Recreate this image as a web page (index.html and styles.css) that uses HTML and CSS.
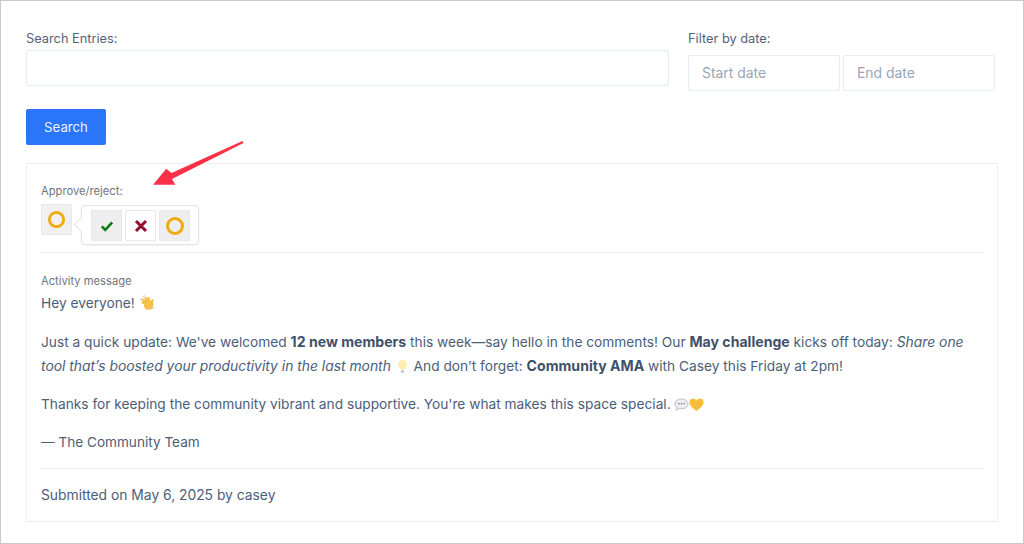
FILE: index.html
```html
<!DOCTYPE html>
<html lang="en">
<head>
<meta charset="utf-8">
<title>Entries</title>
<link rel="stylesheet" href="styles.css">
</head>
<body>
<div class="frame">
  <form class="search">
    <div class="fields">
      <div class="field-main">
        <label class="field-label">Search Entries:</label>
        <input class="input input-main" type="text">
      </div>
      <div class="field-date">
        <label class="field-label">Filter by date:</label>
        <div class="date-row">
          <input class="input input-date" type="text" placeholder="Start date">
          <input class="input input-date" type="text" placeholder="End date">
        </div>
      </div>
    </div>
    <button class="search-btn" type="button">Search</button>
  </form>
  <section class="entry">
    <div class="approve">
      <div class="small-label">Approve/reject:</div>
      <div class="status-wrap">
        <span class="status-btn"><svg class="ring ring-small" viewBox="0 0 20 20"><circle cx="10" cy="10" r="7.5"/></svg></span>
        <div class="popover">
          <span class="tool tool-on"><svg class="glyph" viewBox="0 0 16 16"><path class="check" d="M2.800 8.400 6.200 11.800 13.200 4.400"/></svg></span>
          <span class="tool"><svg class="glyph" viewBox="0 0 16 16"><path class="cross" d="M3 3 13 13M13 3 3 13"/></svg></span>
          <span class="tool tool-on"><svg class="ring" viewBox="0 0 20 20"><circle cx="10" cy="10" r="7.5"/></svg></span>
        </div>
      </div>
    </div>
    <div class="message">
      <div class="small-label">Activity message</div>
      <p class="first">Hey everyone! <svg class="emoji emoji-wave" viewBox="0 0 16 16"><path class="wave-lines" d="M1.500 5.500 2.500 3M4 1.500 6 .8M13.500 11.500 14.500 14"/><path class="wave-fingers" d="M10 10 3.500 7.500M10 10 4 4.800M10 10 6.500 3M10 10 9.500 3.200M11 10 13.500 5.500"/><circle class="wave-palm" cx="9.600" cy="10" r="4.800"/></svg></p>
      <p>Just a quick update: We've welcomed <strong>12 new members</strong> this week—say hello in the comments! Our <strong>May challenge</strong> kicks off today: <em>Share one tool that’s boosted your productivity in the last month</em> <svg class="emoji" viewBox="0 0 16 16"><path class="bulb-fill" d="M8 1a4.800 4.800 0 0 0-2.800 8.700c.6.500.8 1.100.9 1.800h3.800c.1-.7.3-1.300.9-1.800A4.800 4.800 0 0 0 8 1z"/><path class="bulb-base" d="M6.300 12h3.400v2.200l-1 .8H7.300l-1-.8z"/></svg> And don’t forget: <strong>Community AMA</strong> with Casey this Friday at 2pm!</p>
      <p>Thanks for keeping the community vibrant and supportive. You're what makes this space special. <svg class="emoji" viewBox="0 0 16 16"><path class="bubble-fill" d="M8 2C4 2 1 4.300 1 7.300c0 1.500.7 2.800 2 3.700l-.8 3 3.300-1.700c.8.200 1.600.3 2.500.3 4 0 7-2.300 7-5.300S12 2 8 2z"/><circle class="bubble-dot" cx="5.200" cy="7.300" r=".8"/><circle class="bubble-dot" cx="8" cy="7.300" r=".8"/><circle class="bubble-dot" cx="10.800" cy="7.300" r=".8"/></svg><svg class="emoji" viewBox="0 0 16 16"><path class="heart-fill" d="M8 15C3.500 11.600.5 9 .5 5.700.5 3.400 2.300 1.700 4.500 1.700 6 1.700 7.300 2.500 8 3.800 8.700 2.500 10 1.700 11.500 1.700c2.200 0 4 1.700 4 4C15.500 9 12.500 11.600 8 15z"/></svg></p>
      <p class="signoff">— The Community Team</p>
    </div>
    <div class="submitted">Submitted on May 6, 2025 by casey</div>
  </section>
  <svg class="annotation" viewBox="0 0 96 50"><path d="M92.500 1 21.500 33 16.300 28.700 3 44.700 25.300 44.700 22 39 93.500 3z"/></svg>
</div>
</body>
</html>
```
FILE: styles.css
```css
* { box-sizing: border-box; }
html, body { margin: 0; padding: 0; }
body {
  width: 1024px;
  height: 544px;
  overflow: hidden;
  background: #fff;
  font-family: Inter, "Liberation Sans", sans-serif;
  color: #4b5e78;
}
.frame {
  position: relative;
  height: 544px;
  border: 1px solid #cbcbcb;
  padding: 29px 25px 0 25px;
}
.fields { display: flex; justify-content: space-between; align-items: flex-start; padding-right: 3px; }
.field-main { width: 643px; }
.field-date { width: 307px; }
.field-label { display: block; font-size: 12.800px; line-height: 18px; color: #526379; }
.input {
  display: block;
  height: 36px;
  background: #fff;
  border: 1px solid #e8edf3;
  border-radius: 2px;
  font: 13.900px Inter, "Liberation Sans", sans-serif;
  padding: 0 13px;
  outline: none;
}
.input::placeholder { color: #9aa5b5; opacity: 1; }
.input-main { width: 100%; margin-top: 2px; }
.date-row { display: flex; gap: 3px; margin-top: 7px; }
.input-date { width: 152px; }
.search-btn {
  display: block;
  width: 80px;
  height: 36px;
  margin-top: 18px;
  border: 0;
  border-radius: 2px;
  background: #2b75fb;
  color: #eaf2ff;
  font: 13.200px Inter, "Liberation Sans", sans-serif;
  padding: 0;
}
.entry {
  margin-top: 18px;
  width: 972px;
  height: 359px;
  border: 1px solid #eceff5;
  padding: 0 14px;
}
.approve { padding-top: 20px; height: 89px; border-bottom: 1px solid #eceff5; }
.small-label { font-size: 11.200px; line-height: 14px; color: #6f747c; }
.status-wrap { position: relative; margin-top: 6px; }
.status-btn, .tool {
  display: flex;
  align-items: center;
  justify-content: center;
  border: 1px solid #e8e8e8;
}
.status-btn { width: 31px; height: 31px; background: #f0f0f0; }
.tool { position: relative; width: 31px; height: 31px; background: #fff; }
.tool-on { background: #eeeeee; }
.ring { width: 20px; height: 20px; fill: none; stroke: #eeaa0e; stroke-width: 3; }
.ring-small { width: 19px; height: 19px; }
.glyph { width: 16px; height: 16px; fill: none; }
.check { stroke: #107a12; stroke-width: 2.600; }
.cross { stroke: #960d27; stroke-width: 3; }
.popover {
  position: absolute;
  left: 40px;
  top: 1px;
  display: flex;
  gap: 3px;
  width: 118px;
  height: 40px;
  padding: 4px 0 0 9px;
  background: #fff;
  border: 1px solid #e5e5e5;
  border-radius: 4px;
  box-shadow: 0 1px 2px rgba(0,0,0,.06);
}
.popover::before {
  content: "";
  position: absolute;
  left: -6px;
  top: 13px;
  width: 10px;
  height: 10px;
  background: #fff;
  border-left: 1px solid #e5e5e5;
  border-bottom: 1px solid #e5e5e5;
  transform: rotate(45deg);
}
.message { padding-top: 21px; height: 216px; border-bottom: 1px solid #eceff5; font-size: 13.720px; line-height: 24px; }
.message .small-label { line-height: 14px; }
.message p { margin: 14px 0 0; }
.message p.first { margin-top: 3px; }
.message .first + p { margin-top: 15px; }
.message .signoff { font-size: 13.600px; }
strong { font-size: 14.100px; font-weight: 700; color: #3f5169; }
em { font-size: 13.870px; }
.emoji { display: inline-block; width: 15px; height: 15px; vertical-align: -3px; }
.emoji-wave { width: 16px; height: 16px; }
.wave-fingers { fill: none; stroke: #f5c04a; stroke-width: 2.400; stroke-linecap: round; }
.wave-palm { fill: #f5c04a; }
.wave-lines { fill: none; stroke: #b9bcc2; stroke-width: 1; }
.bulb-fill { fill: #fbeeb0; }
.bulb-base { fill: #c2c6cc; }
.bubble-fill { fill: #eceef0; stroke: #a9adb3; stroke-width: .8; }
.bubble-dot { fill: #6b7078; }
.heart-fill { fill: #f7bd3a; }
.submitted { font-size: 13.830px; line-height: 20px; padding-top: 16px; }
.annotation {
  position: absolute;
  left: 149px;
  top: 139px;
  width: 96px;
  height: 50px;
  fill: #fb3049;
}
```
